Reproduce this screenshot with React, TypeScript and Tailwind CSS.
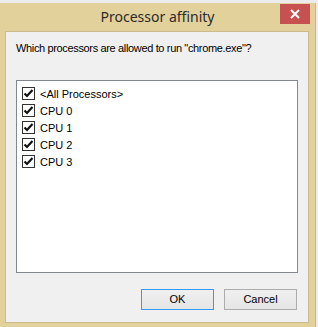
import React from "react";

const items = ["<All Processors>", "CPU 0", "CPU 1", "CPU 2", "CPU 3"];

function CheckBox() {
  return (
    <span className="flex h-[13px] w-[13px] shrink-0 items-center justify-center border border-[#333333] bg-white">
      <svg width="11" height="11" viewBox="0 0 11 11">
        <path d="M1.5 5.5 L4 8 L9.5 2" fill="none" stroke="#111" strokeWidth="2.2" />
      </svg>
    </span>
  );
}

export default function App() {
  return (
    <div
      className="relative h-[327px] w-[318px] overflow-hidden bg-[#ececec]"
      style={{ fontFamily: '"Liberation Sans", Arial, sans-serif' }}
    >
      <div className="mt-[3px] flex h-[330px] w-[316px] flex-col border-r border-[#c9b784] bg-[#e3d19b]">
        {/* title bar */}
        <div className="relative flex h-[28px] shrink-0 items-center justify-center">
          <span className="pb-[1px] text-[14px] text-[#2b2b2b]" style={{ fontFamily: '"Noto Sans", sans-serif' }}>
            Processor affinity
          </span>
          <div className="absolute right-[5px] top-[1px] flex h-[20px] w-[30px] items-center justify-center bg-[#c75050]">
            <svg width="10" height="10" viewBox="0 0 10 10">
              <path d="M1 1 L9 9 M9 1 L1 9" stroke="#fff" strokeWidth="2" />
            </svg>
          </div>
        </div>

        {/* client area */}
        <div className="ml-[5px] flex h-[292px] w-[304px] flex-col border border-[#cbbb8c] bg-[#f0f0f0] pl-[10px] pr-[8px] pt-[8px]">
          <p className="h-[16px] text-[11px] leading-[16px] tracking-[-0.35px] text-black">
            Which processors are allowed to run "chrome.exe"?
          </p>
          <div className="mt-[24px] flex h-[193px] w-[282px] flex-col border border-[#828790] bg-white pl-[5px] pt-[4px]">
            {items.map((t) => (
              <div key={t} className="flex h-[17px] items-center gap-[5px]">
                <CheckBox />
                <span className="text-[11px] leading-[16px] text-black">{t}</span>
              </div>
            ))}
          </div>
          <div className="mt-[16px] flex gap-[10px] pl-[125px]">
            <button className="h-[21px] w-[73px] border border-[#3399ff] bg-gradient-to-b from-[#f0f0f0] to-[#e5e5e5] text-[11px] text-black">
              OK
            </button>
            <button className="h-[21px] w-[73px] border border-[#acacac] bg-gradient-to-b from-[#f0f0f0] to-[#e5e5e5] text-[11px] text-black">
              Cancel
            </button>
          </div>
        </div>
      </div>
    </div>
  );
}
